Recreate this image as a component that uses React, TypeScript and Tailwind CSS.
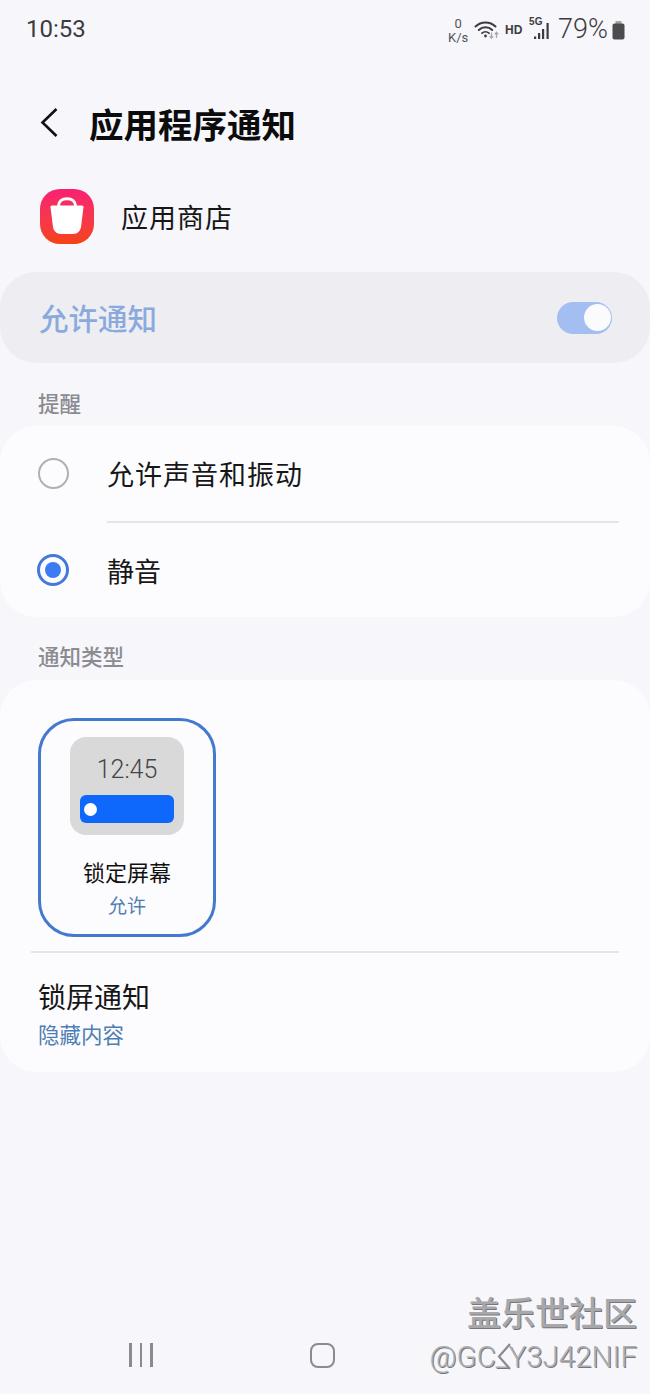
const cjk = "font-['Noto_Sans_CJK_SC','Noto_Sans',sans-serif]";

function StatusIcons() {
  return (
    <div className="flex items-center text-[#3c3c40] mt-[1px]">
      <div className="w-[20px] mr-[6px] mt-[3px] flex flex-col items-center text-[13px] leading-[14px] font-['Roboto',sans-serif] text-[#55555a]">
        <span>0</span>
        <span>K/s</span>
      </div>
      <svg width="26" height="22" viewBox="0 0 26 22" fill="none" className="mr-[5px]">
        <path d="M1.5 7.5C7 2 16 2 21.5 7.5" stroke="#3c3c40" strokeWidth="2" strokeLinecap="round" />
        <path d="M4.8 11C8.5 7.3 14.5 7.3 18.2 11" stroke="#3c3c40" strokeWidth="2" strokeLinecap="round" />
        <path d="M8 14.2C10 12.3 13 12.3 15 14.2" stroke="#3c3c40" strokeWidth="1.8" strokeLinecap="round" />
        <circle cx="11.5" cy="17" r="1.4" fill="#3c3c40" />
        <path d="M17.5 13.5V19M15.8 17.2L17.5 19.2L19.2 17.2" stroke="#a9a9ad" strokeWidth="1.3" />
        <path d="M22.5 19V13.5M20.8 15.3L22.5 13.3L24.2 15.3" stroke="#a9a9ad" strokeWidth="1.3" />
      </svg>
      <span className="w-[17px] text-[12px] font-bold leading-none mr-[7px] font-['Liberation_Sans',sans-serif]">HD</span>
      <div className="relative w-[23px] h-[24px] mr-[6px]">
        <span className="absolute left-0 top-[-2px] text-[10px] font-bold leading-[12px] font-['Liberation_Sans',sans-serif]">5G</span>
        <svg width="23" height="24" viewBox="0 0 23 24" className="absolute inset-0">
          <rect x="5" y="18.5" width="2.2" height="2.5" fill="#3c3c40" />
          <rect x="9" y="15" width="2.2" height="6" fill="#3c3c40" />
          <rect x="13" y="11" width="2.2" height="10" fill="#3c3c40" />
          <rect x="17.5" y="5" width="2.2" height="16" fill="#3c3c40" />
        </svg>
      </div>
      <span className="text-[27px] leading-none font-['Roboto',sans-serif] font-light mr-[4px]">79%</span>
      <svg width="13" height="19" viewBox="0 0 13 19" className="mt-[1px]">
        <rect x="3.5" y="0" width="6" height="3" rx="0.6" fill="#a2a2a5" />
        <rect x="0.5" y="2.5" width="12" height="16" rx="2" fill="#4b4b4e" />
      </svg>
    </div>
  );
}

function BagIcon() {
  return (
    <div className="w-[54px] h-[55px] rounded-[20px] bg-gradient-to-b from-[#f91f72] to-[#f5420f]">
      <svg width="54" height="55" viewBox="0 0 54 55" fill="none">
        <path d="M18.5 18V17C18.5 12.5 22 9.8 27 9.8C32 9.8 35.5 12.5 35.5 17V18" stroke="#fff" strokeWidth="3" />
        <path d="M12 16.5H42C43 16.5 43.6 17.3 43.5 18.2L41 38C40.4 42.2 37.2 45 33 45H21C16.8 45 13.6 42.2 13 38L10.5 18.2C10.4 17.3 11 16.5 12 16.5Z" fill="#fff" />
      </svg>
    </div>
  );
}

function Radio({ checked }: { checked?: boolean }) {
  if (checked) {
    return (
      <div className="w-[32px] h-[32px] rounded-full border-[3px] border-[#4479d8] flex items-center justify-center">
        <div className="w-[16px] h-[16px] rounded-full bg-[#3b7cf5]" />
      </div>
    );
  }
  return <div className="w-[31px] h-[31px] rounded-full border-[2px] border-[#b0b0b3]" />;
}

export default function App() {
  return (
    <div className={`relative w-[650px] h-[1394px] overflow-hidden bg-[#f6f6fb] flex flex-col ${cjk}`}>
      {/* status bar */}
      <div className="h-[58px] pl-[26px] pr-[25px] flex items-center justify-between">
        <span className="text-[24px] leading-none text-[#3c3c40] font-['Roboto',sans-serif]">10:53</span>
        <StatusIcons />
      </div>

      {/* header */}
      <div className="h-[64px] pl-[40px] flex items-center mt-[33px]">
        <svg width="20" height="32" viewBox="0 0 20 32" fill="none">
          <path d="M16.5 2L2.5 15.5L16.5 29" stroke="#111" strokeWidth="2.6" />
        </svg>
        <h1 className="ml-[29px] text-[34.5px] leading-none font-bold text-[#0c0c0c]">应用程序通知</h1>
      </div>

      <div className="h-[54px] mt-[34px] pl-[40px] flex items-center">
        <BagIcon />
        <span className="ml-[27px] text-[27px] leading-none tracking-[1px] text-[#171717]">应用商店</span>
      </div>

      {/* main switch */}
      <div className="h-[91px] mt-[29px] rounded-[36px] bg-[#eeeef2] pl-[39px] pr-[38px] flex items-center justify-between">
        <span className="text-[29.5px] leading-none font-medium text-[#8aaade]">允许通知</span>
        <div className="w-[55px] h-[32px] rounded-full bg-[#a3bff2] flex items-center justify-end pr-[1px]">
          <div className="w-[27px] h-[27px] rounded-full bg-[#fbfbfe]" />
        </div>
      </div>

      <div className="h-[63px] pl-[38px] pt-[28px] text-[21.5px] leading-[24px] font-medium text-[#8b8b90]">提醒</div>

      {/* alert card */}
      <div className="h-[191px] rounded-[36px] bg-[#fcfcff] flex flex-col">
        <div className="h-[95px] pl-[38px] flex items-center">
          <Radio />
          <span className="ml-[38px] text-[27px] leading-none tracking-[1px] text-[#171717]">允许声音和振动</span>
        </div>
        <div className="h-[2px] ml-[107px] mr-[31px] bg-[#e4e4e9]" />
        <div className="flex-1 pl-[37px] flex items-center">
          <Radio checked />
          <span className="ml-[38px] text-[27px] leading-none text-[#171717]">静音</span>
        </div>
      </div>

      <div className="h-[63px] pl-[38px] pt-[27px] text-[21.5px] leading-[24px] font-medium text-[#8b8b90]">通知类型</div>

      {/* notification type card */}
      <div className="h-[392px] rounded-[36px] bg-[#fcfcff] flex flex-col">
        <div className="pt-[38px] pl-[38px]">
          <div className="w-[178px] h-[219px] rounded-[36px] border-[3px] border-[#4479cd] flex flex-col items-center pt-[16px]">
            <div className="w-[114px] h-[98px] rounded-[16px] bg-[#d9d9d9] flex flex-col items-center pt-[20px]">
              <span className="text-[25px] leading-[26px] font-light text-[#454545] font-['Roboto',sans-serif]">12:45</span>
              <div className="mt-[12px] w-[94px] h-[28px] rounded-[6px] bg-[#0d68fb] flex items-center pl-[4px]">
                <div className="w-[13px] h-[13px] rounded-full bg-white" />
              </div>
            </div>
            <span className="mt-[24px] text-[22px] leading-[24px] text-[#111]">锁定屏幕</span>
            <span className="mt-[11px] text-[19px] leading-[22px] text-[#4f7db3]">允许</span>
          </div>
        </div>
        <div className="h-[2px] mt-[14px] ml-[31px] mr-[31px] bg-[#e4e4e9]" />
        <div className="pl-[38px] pt-[26px]">
          <div className="text-[28px] leading-[34px] text-[#171717]">锁屏通知</div>
          <div className="mt-[8px] text-[21.5px] leading-[26px] text-[#4f7db3]">隐藏内容</div>
        </div>
      </div>

      {/* nav bar */}
      <div className="mt-auto h-[51px] flex items-start">
        <div className="ml-[129px] flex gap-[8px]">
          <div className="w-[2.5px] h-[24px] bg-[#8b8b8f]" />
          <div className="w-[2.5px] h-[24px] bg-[#8b8b8f]" />
          <div className="w-[2.5px] h-[24px] bg-[#8b8b8f]" />
        </div>
        <div className="ml-[157px] w-[25px] h-[25px] rounded-[8px] border-[2.5px] border-[#8b8b8f]" />
      </div>

      {/* watermark */}
      <div className="absolute right-[13px] top-[1294px] text-[34px] leading-[36px] font-medium text-[#a8a8ab] [text-shadow:1px_1px_0_#77777a]">盖乐世社区</div>
      <div className="absolute right-[13px] top-[1340px] text-[29.5px] leading-[34px] font-light text-[#aeaeb1] font-['Roboto',sans-serif] [text-shadow:1px_1px_0_#77777a]">@GC_Y3J42NIF</div>
      <svg width="16" height="30" viewBox="0 0 16 30" fill="none" className="absolute left-[497px] top-[1342px]">
        <path d="M13 2L2 14.5L13 27" stroke="#8b8b8f" strokeWidth="2.2" />
      </svg>
    </div>
  );
}
